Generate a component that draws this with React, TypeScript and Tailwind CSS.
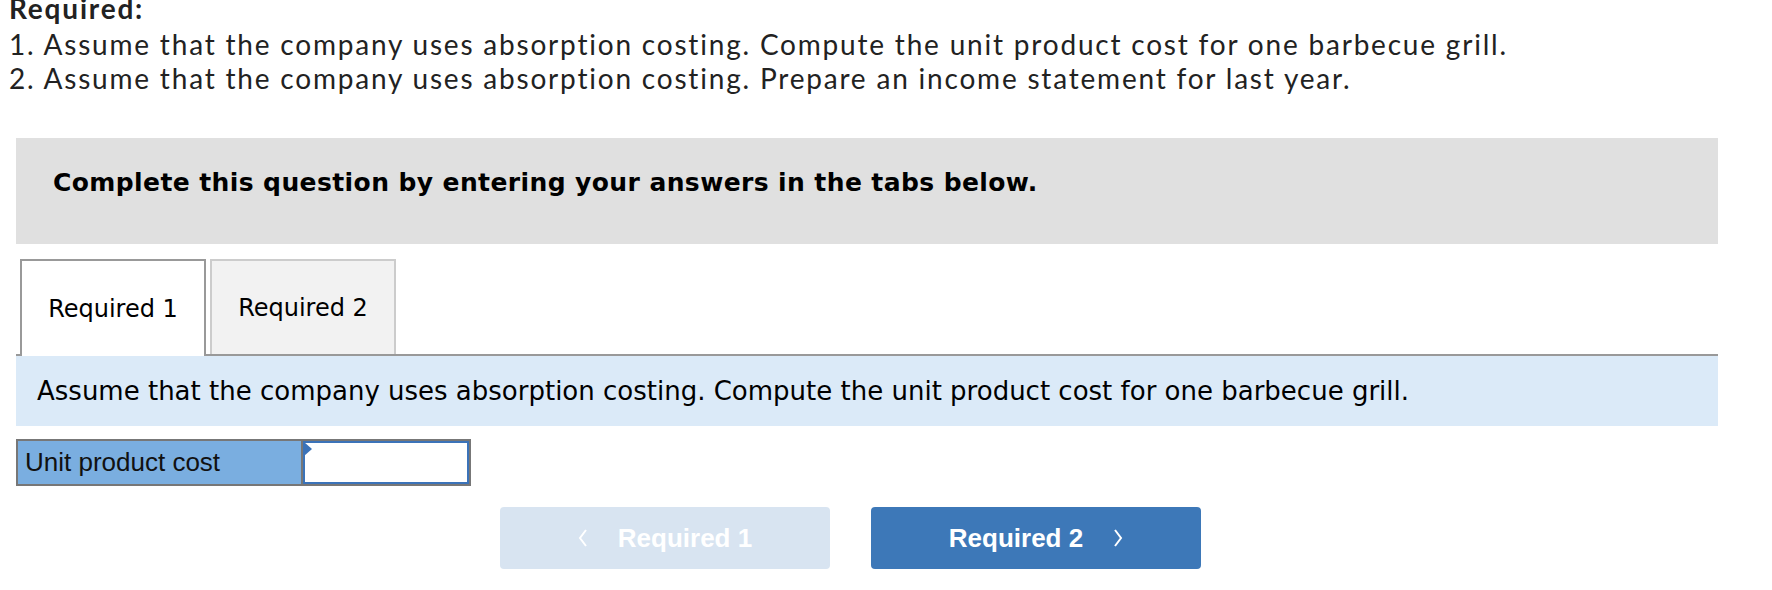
import React from 'react';

const proxima = "font-['Lato','Open_Sans',sans-serif]";
const verdana = "font-['DejaVu_Sans','Verdana',sans-serif]";
const arial = "font-['Liberation_Sans','Arial',sans-serif]";

export default function App() {
  return (
    <div className="w-[1772px] h-[590px] overflow-hidden bg-white text-[#222]">
      {/* Required list */}
      <div className={`${proxima} text-[28px] leading-[34px] tracking-[1.8px] pl-[9px] -mt-[10px]`}>
        <p className="font-bold leading-[37px]">Required:</p>
        <p>1. Assume that the company uses absorption costing. Compute the unit product cost for one barbecue grill.</p>
        <p>2. Assume that the company uses absorption costing. Prepare an income statement for last year.</p>
      </div>

      <div className="w-[1702px] ml-[16px]">
        {/* Instructions banner */}
        <div className="mt-[43px] h-[106px] bg-[#e0e0e0] pt-[30px] pl-[37px]">
          <p className={`${verdana} font-bold text-[25px] leading-[30px] tracking-[0.4px] text-black`}>
            Complete this question by entering your answers in the tabs below.
          </p>
        </div>

        {/* Tabs */}
        <div className={`${verdana} mt-[15px] flex items-end border-b-2 border-[#999] pl-[4px] gap-[4px] text-[24px] text-black`}>
          <div className="w-[186px] h-[97px] -mb-[2px] bg-white border-2 border-b-0 border-[#999] flex items-center justify-center">
            Required 1
          </div>
          <div className="w-[186px] h-[95px] bg-[#f2f2f2] border-2 border-b-0 border-[#ccc] flex items-center justify-center">
            Required 2
          </div>
        </div>

        {/* Question */}
        <div className={`${verdana} h-[70px] bg-[#dbeaf8] flex items-center pl-[21px] text-[26px] text-black`}>
          Assume that the company uses absorption costing. Compute the unit product cost for one barbecue grill.
        </div>

        {/* Answer row */}
        <div className="mt-[13px] flex w-[455px] h-[47px] border-2 border-[#777]">
          <div className={`${arial} w-[285px] bg-[#7aaee0] border-r-2 border-[#777] flex items-center pl-[7px] text-[26px] text-[#111]`}>
            Unit product cost
          </div>
          <div className="relative flex-1 bg-white border-2 border-[#3b73b9]">
            <span className="absolute -left-[1px] -top-[1px] w-0 h-0 border-t-[7px] border-b-[7px] border-l-[8px] border-t-transparent border-b-transparent border-l-[#3b73b9]" />
          </div>
        </div>

        {/* Nav buttons */}
        <div className={`${arial} mt-[21px] flex gap-[41px] ml-[484px] font-bold text-[26px] text-white`}>
          <div className="w-[330px] h-[62px] rounded-[4px] bg-[#d8e4f1] flex items-center justify-center gap-[30px]">
            <svg width="10" height="20" viewBox="0 0 10 20" fill="none" stroke="white" strokeWidth="2">
              <path d="M8 2 L2 10 L8 18" />
            </svg>
            <span>Required 1</span>
          </div>
          <div className="w-[330px] h-[62px] rounded-[4px] bg-[#3d78b8] flex items-center justify-center gap-[30px]">
            <span>Required 2</span>
            <svg width="10" height="20" viewBox="0 0 10 20" fill="none" stroke="white" strokeWidth="2">
              <path d="M2 2 L8 10 L2 18" />
            </svg>
          </div>
        </div>
      </div>
    </div>
  );
}
